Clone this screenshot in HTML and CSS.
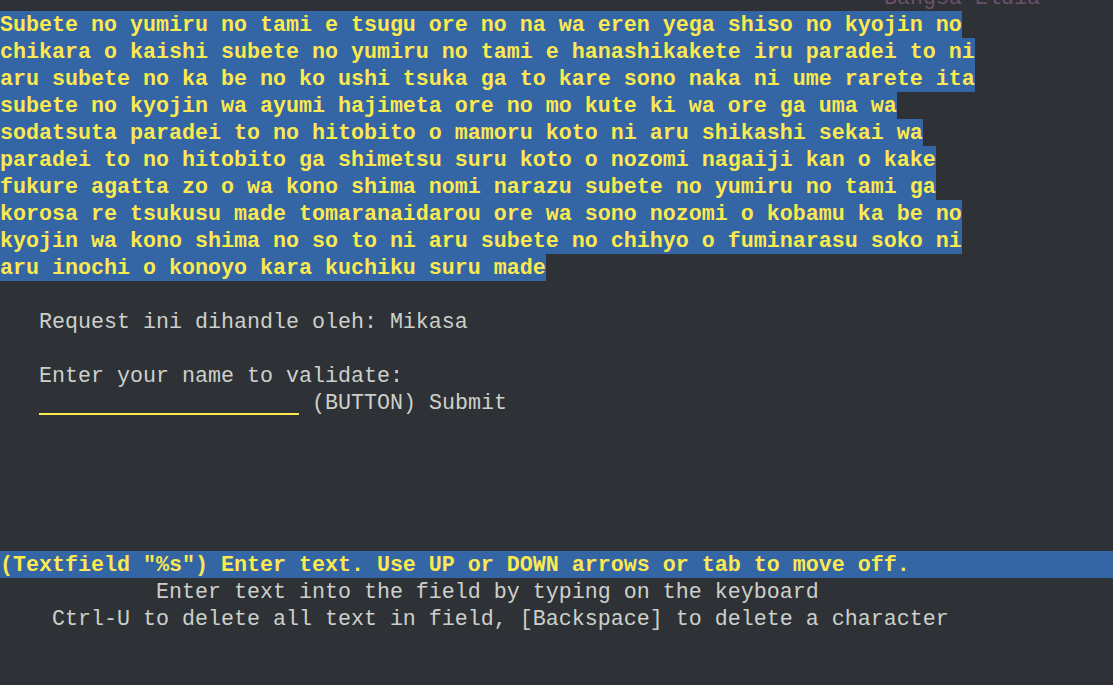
FILE: index.html
```html
<!DOCTYPE html>
<html>
<head>
<meta charset="utf-8">
<link rel="stylesheet" href="styles.css">
</head>
<body>
<div class="term">
  <div class="row-clip"><div class="row dim"><span class="pad68"></span>Bangsa Eldia</div></div>
  <div class="row"><span class="hl">Subete no yumiru no tami e tsugu ore no na wa eren yega shiso no kyojin no</span></div>
  <div class="row"><span class="hl">chikara o kaishi subete no yumiru no tami e hanashikakete iru paradei to ni</span></div>
  <div class="row"><span class="hl">aru subete no ka be no ko ushi tsuka ga to kare sono naka ni ume rarete ita</span></div>
  <div class="row"><span class="hl">subete no kyojin wa ayumi hajimeta ore no mo kute ki wa ore ga uma wa</span></div>
  <div class="row"><span class="hl">sodatsuta paradei to no hitobito o mamoru koto ni aru shikashi sekai wa</span></div>
  <div class="row"><span class="hl">paradei to no hitobito ga shimetsu suru koto o nozomi nagaiji kan o kake</span></div>
  <div class="row"><span class="hl">fukure agatta zo o wa kono shima nomi narazu subete no yumiru no tami ga</span></div>
  <div class="row"><span class="hl">korosa re tsukusu made tomaranaidarou ore wa sono nozomi o kobamu ka be no</span></div>
  <div class="row"><span class="hl">kyojin wa kono shima no so to ni aru subete no chihyo o fuminarasu soko ni</span></div>
  <div class="row"><span class="hl">aru inochi o konoyo kara kuchiku suru made</span></div>
  <div class="row"></div>
  <div class="row">   Request ini dihandle oleh: Mikasa</div>
  <div class="row"></div>
  <div class="row">   Enter your name to validate:</div>
  <div class="row">   <span class="field"></span> (BUTTON) Submit</div>
  <div class="row"></div>
  <div class="row"></div>
  <div class="row"></div>
  <div class="row"></div>
  <div class="row"></div>
  <div class="row status">(Textfield "%s") Enter text. Use UP or DOWN arrows or tab to move off.</div>
  <div class="row">            Enter text into the field by typing on the keyboard</div>
  <div class="row">    Ctrl-U to delete all text in field, [Backspace] to delete a character</div>
</div>
</body>
</html>
```

FILE: styles.css
```css
html, body {
  margin: 0;
  padding: 0;
  background: #2e3236;
  width: 1113px;
  height: 685px;
  overflow: hidden;
}

.term {
  font-family: "Liberation Mono", "Courier New", monospace;
  font-size: 21.667px;
  color: #cdd0ca;
  display: flex;
  flex-direction: column;
}

.row {
  height: 27px;
  line-height: 29px;
  white-space: pre;
  flex: none;
}

.row-clip {
  height: 11px;
  overflow: hidden;
  display: flex;
  flex-direction: column;
  justify-content: flex-end;
  flex: none;
}

.dim {
  color: #6f4f6e;
}

.pad68 {
  display: inline-block;
  width: 884px;
}

.hl {
  display: inline-block;
  height: 27px;
  background: #3465a4;
  color: #fce94f;
  font-weight: bold;
}

.status {
  background: #3465a4;
  color: #fce94f;
  font-weight: bold;
}

.field {
  display: inline-block;
  width: 260px;
  height: 24px;
  border-bottom: 2px solid #fce94f;
  vertical-align: top;
}
```
